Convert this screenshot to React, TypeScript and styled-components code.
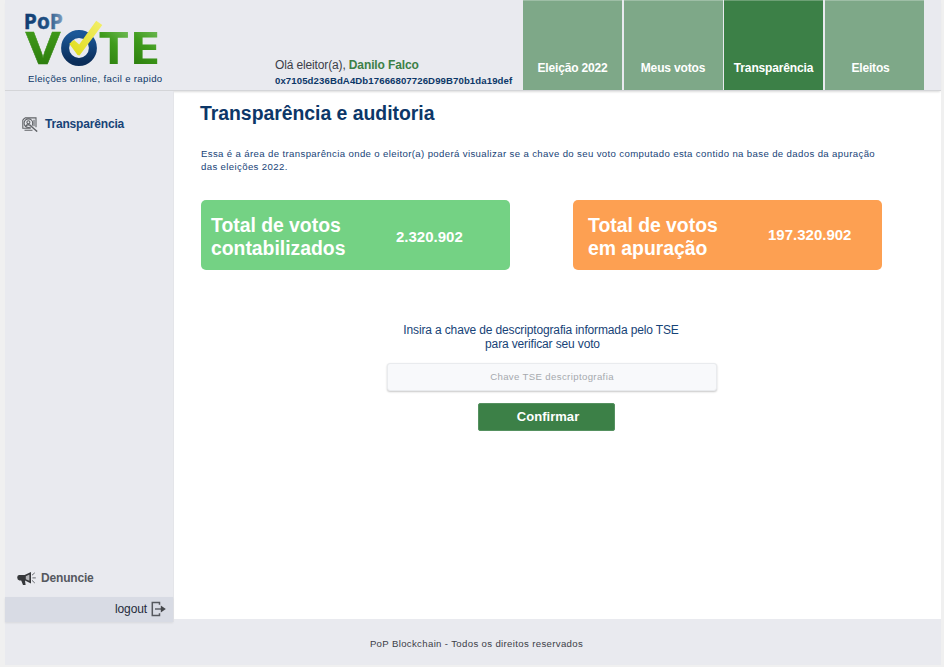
import React from "react";
import styled, { createGlobalStyle } from "styled-components";

const GlobalStyle = createGlobalStyle`
  * { box-sizing: border-box; }
  body {
    margin: 0;
    background: #f0f0f0;
    font-family: "Liberation Sans", Arial, sans-serif;
    font-size: 12px;
    color: #0c3768;
  }
`;

const Page = styled.div`
  display: flex;
  flex-direction: column;
  width: 936px;
  height: 665px;
  margin-left: 5px;
  background: #fff;
`;

const Header = styled.header`
  position: relative;
  display: flex;
  flex: none;
  height: 91px;
  padding-right: 17.5px;
  background: #e9eaef;
  border-bottom: 1px solid #d4d5d8;
  box-shadow: 0 2px 2px -1px rgba(0, 0, 0, 0.14);
`;

const Brand = styled.div`
  width: 270px;
  padding: 8px 0 0 18px;
`;

const LogoSvg = styled.svg`
  display: block;
  width: 144px;
  height: 62px;
  overflow: visible;
`;

const Tagline = styled.p`
  margin: 3px 0 0 5px;
  font-size: 9.6px;
  line-height: 12px;
  letter-spacing: 0.33px;
  white-space: nowrap;
`;

const Voter = styled.div`
  flex: 1;
  padding-top: 58px;
  white-space: nowrap;
`;

const Greeting = styled.p`
  margin: 0;
  line-height: 15px;
  letter-spacing: -0.14px;
  color: #3c4048;
`;

const VoterName = styled.strong`
  color: #3c8047;
  letter-spacing: -0.11px;
`;

const WalletKey = styled.p`
  margin: 2px 0 0;
  font-size: 9.6px;
  font-weight: bold;
  line-height: 12px;
  letter-spacing: 0.1px;
`;

const Tabs = styled.nav`
  display: flex;
  gap: 1.5px;
`;

const Tab = styled.a<{ $active?: boolean; $trailing?: boolean }>`
  display: flex;
  align-items: flex-end;
  justify-content: center;
  width: 99px;
  height: 90px;
  padding-bottom: 14px;
  padding-right: ${(p) => (p.$trailing ? "7px" : "0")};
  border-top: 1px solid rgba(255, 255, 255, 0.25);
  background: ${(p) => (p.$active ? "#3c8047" : "#7ea888")};
  color: #fff;
  font-weight: bold;
  line-height: 15px;
  letter-spacing: -0.16px;
`;

const Body = styled.div`
  display: flex;
  flex: 1;
  min-height: 0;
`;

const Sidebar = styled.aside`
  display: flex;
  flex-direction: column;
  width: 169px;
  margin-bottom: -3px;
  background: #e9eaef;
  border-right: 1px solid #e4e5e9;
  z-index: 1;
`;

const SideLink = styled.a<{ $muted?: boolean }>`
  display: flex;
  align-items: center;
  gap: ${(p) => (p.$muted ? "5px" : "7px")};
  height: 18px;
  margin: ${(p) => (p.$muted ? "auto 0 10px 12px" : "24px 0 0 17px")};
  color: ${(p) => (p.$muted ? "#55585e" : "#174377")};
  font-weight: bold;
  letter-spacing: -0.18px;
`;

const Logout = styled.button`
  display: flex;
  align-items: center;
  justify-content: flex-end;
  gap: 4px;
  width: 168px;
  height: 25px;
  padding: 0 7px 1px 0;
  border: 0;
  background: #d8dbe4;
  box-shadow: 0 1px 2px rgba(0, 0, 0, 0.08);
  color: #252b3b;
  font: inherit;
  letter-spacing: -0.12px;
`;

const Main = styled.main`
  flex: 1;
  padding: 11px 0 0 27px;
`;

const Title = styled.h1`
  margin: 0 0 0 -1px;
  font-size: 19.4px;
  line-height: 23px;
  letter-spacing: -0.02px;
`;

const Intro = styled.p`
  margin: 22px 0 0;
  font-size: 9.6px;
  line-height: 13px;
  letter-spacing: 0.37px;
  white-space: nowrap;
  color: #174377;
`;

const Totals = styled.div`
  display: flex;
  gap: 63px;
  margin-top: 27px;
`;

const TotalCard = styled.section<{ $tone: "green" | "orange" }>`
  display: grid;
  grid-template-columns: ${(p) => (p.$tone === "green" ? "185px" : "180px")} auto;
  align-items: center;
  justify-content: start;
  width: 309px;
  height: 70px;
  padding: ${(p) => (p.$tone === "green" ? "4px 0 0 10px" : "4px 0 0 15px")};
  border-radius: 5px;
  background: ${(p) => (p.$tone === "green" ? "#74d284" : "#fda052")};
  color: #fff;
  font-weight: bold;
`;

const TotalLabel = styled.h2`
  margin: 0;
  font-size: 19.4px;
  line-height: 23px;
  letter-spacing: -0.02px;
`;

const TotalValue = styled.span<{ $raised?: boolean }>`
  font-size: 15px;
  line-height: 18px;
  padding-bottom: ${(p) => (p.$raised ? "4px" : "0")};
`;

const KeyForm = styled.form`
  display: flex;
  flex-direction: column;
  align-items: center;
  width: 330px;
  margin: 53px 0 0 186px;
`;

const KeyLabel = styled.label`
  margin-right: 22px;
  line-height: 14px;
  letter-spacing: -0.14px;
  text-align: center;
  white-space: nowrap;
  color: #174377;
`;

const SecondLine = styled.span`
  display: block;
  padding-left: 3px;
`;

const KeyInput = styled.input`
  width: 330px;
  height: 28px;
  margin-top: 12px;
  padding: 0 0 1px;
  border: 1px solid #e9ebee;
  border-radius: 3px;
  background: #f8f9fb;
  box-shadow: 0 1px 2px rgba(0, 0, 0, 0.22);
  font: 9.6px "Liberation Sans", Arial, sans-serif;
  letter-spacing: 0.37px;
  text-align: center;
  &::placeholder { color: #a6a9ae; opacity: 1; }
`;

const Confirm = styled.button`
  width: 137px;
  height: 28px;
  margin: 12px 11px 0 0;
  padding: 0 0 1px 3px;
  border: 1px solid #559160;
  border-radius: 2px;
  background: #3c8047;
  color: #fff;
  font: bold 13px "Liberation Sans", Arial, sans-serif;
  letter-spacing: 0.04px;
`;

const Footer = styled.footer`
  display: flex;
  flex: none;
  justify-content: center;
  height: 46px;
  padding: 18px 0 0 7px;
  background: #e9eaef;
  color: #3c4048;
  font-size: 9.6px;
  line-height: 13px;
  letter-spacing: 0.35px;
`;

const Icon = styled.svg`
  flex: none;
  display: block;
`;

const Logo = () => (
  <LogoSvg viewBox="23 8 144 62" fontFamily="'Open Sans', 'Noto Sans', sans-serif" fontWeight="700">
    <defs>
      <linearGradient id="leaf" x1="0" y1="0" x2="0" y2="1">
        <stop offset="0" stopColor="#47a51f" />
        <stop offset="1" stopColor="#277409" />
      </linearGradient>
      <linearGradient id="leafLight" x1="0.7" y1="0.15" x2="0.4" y2="0.9">
        <stop offset="0" stopColor="#6fba55" />
        <stop offset="0.45" stopColor="#3f9b1c" />
        <stop offset="1" stopColor="#2c7e0d" />
      </linearGradient>
      <linearGradient id="sea" x1="0" y1="0" x2="0" y2="1">
        <stop offset="0" stopColor="#1b5797" />
        <stop offset="1" stopColor="#0b2d59" />
      </linearGradient>
      <linearGradient id="seaFade" x1="0" y1="0" x2="1" y2="0">
        <stop offset="0" stopColor="#0f3a70" />
        <stop offset="0.6" stopColor="#205184" />
        <stop offset="1" stopColor="#7c9cbe" />
      </linearGradient>
      <linearGradient id="sun" x1="1" y1="0" x2="0" y2="1">
        <stop offset="0" stopColor="#f3ef6b" />
        <stop offset="1" stopColor="#dfdc18" />
      </linearGradient>
    </defs>
    <text x="23.8" y="29.3" fontSize="22" textLength="39.2" lengthAdjust="spacingAndGlyphs" fill="url(#seaFade)" stroke="url(#seaFade)" strokeWidth="0.4">PoP</text>
    <text x="25.5" y="64.3" fontSize="45.5" textLength="35" lengthAdjust="spacingAndGlyphs" fill="url(#leaf)" stroke="url(#leaf)" strokeWidth="0.5">V</text>
    <text x="98.6" y="64.3" fontSize="45.5" textLength="30.5" lengthAdjust="spacingAndGlyphs" fill="url(#leafLight)">T</text>
    <text x="129" y="64.3" fontSize="45.5" textLength="31.5" lengthAdjust="spacingAndGlyphs" fill="url(#leafLight)">E</text>
    <circle cx="79" cy="48" r="13.9" fill="none" stroke="url(#sea)" strokeWidth="8" />
    <path d="M69.3 43.8 74 40 79.2 44.5 96.2 20.8 102.3 25 79.5 55.5 77.5 55Z" fill="url(#sun)" />
  </LogoSvg>
);

const AuditIcon = () => (
  <Icon width="16" height="15" viewBox="0 0 16 15" fill="none" stroke="#606367" strokeWidth="1.1">
    <path d="M3 .9h11v9.4M.8 3v8.2h8M3 .9.8 3M2.5 13.2h8M12 2.8v6.4" />
    <circle cx="6.4" cy="6.2" r="4.3" />
    <circle cx="6.4" cy="5.2" r="1.5" />
    <path d="M3.8 9.2c.4-2 4.6-2 5 0M9.4 9.4l5.8 5.2" strokeWidth="1.4" />
  </Icon>
);

const MegaphoneIcon = () => (
  <Icon width="19" height="15" viewBox="0 0 19 15">
    <path d="M2 4h5.6L14 1v11.5L8 9.6 8.6 14H6L4.2 9.5H2.4Q.2 9 .2 6.6T2 4Z" fill="#35373a" />
    <path d="M8.8 5.3 12.4 3.6v6.1L8.8 8.2Z" fill="#b4b5b9" />
    <path d="m15 4.2 2.8-2.4M15.4 6.9h3.4M15 9.4l2.8 2.6" stroke="#66696e" fill="none" />
  </Icon>
);

const LogoutIcon = () => (
  <Icon width="15" height="16" viewBox="0 0 15 16">
    <path d="M8.5 3.8V1.5H1.3v13h7.2v-2.3" fill="none" stroke="#55585e" strokeWidth="1.5" />
    <path d="M4 8H11" stroke="#55585e" strokeWidth="1.4" />
    <path d="M9.8 4.4 14.8 8 9.8 11.6Z" fill="#45484c" />
  </Icon>
);

export default function App() {
  return (
    <>
      <GlobalStyle />
      <Page>
        <Header>
          <Brand>
            <Logo />
            <Tagline>Eleições online, facil e rapido</Tagline>
          </Brand>
          <Voter>
            <Greeting>
              Olá eleitor(a), <VoterName>Danilo Falco</VoterName>
            </Greeting>
            <WalletKey>0x7105d236BdA4Db17666807726D99B70b1da19def</WalletKey>
          </Voter>
          <Tabs>
            <Tab>Eleição 2022</Tab>
            <Tab>Meus votos</Tab>
            <Tab $active>Transparência</Tab>
            <Tab $trailing>Eleitos</Tab>
          </Tabs>
        </Header>
        <Body>
          <Sidebar>
            <SideLink>
              <AuditIcon />
              Transparência
            </SideLink>
            <SideLink $muted>
              <MegaphoneIcon />
              Denuncie
            </SideLink>
            <Logout>
              logout
              <LogoutIcon />
            </Logout>
          </Sidebar>
          <Main>
            <Title>Transparência e auditoria</Title>
            <Intro>
              Essa é a área de transparência onde o eleitor(a) poderá visualizar se a chave do seu voto computado esta contido na base de dados da apuração
              <br />
              das eleições 2022.
            </Intro>
            <Totals>
              <TotalCard $tone="green">
                <TotalLabel>
                  Total de votos
                  <br />
                  contabilizados
                </TotalLabel>
                <TotalValue>2.320.902</TotalValue>
              </TotalCard>
              <TotalCard $tone="orange">
                <TotalLabel>
                  Total de votos
                  <br />
                  em apuração
                </TotalLabel>
                <TotalValue $raised>197.320.902</TotalValue>
              </TotalCard>
            </Totals>
            <KeyForm>
              <KeyLabel htmlFor="key">
                Insira a chave de descriptografia informada pelo TSE
                <SecondLine>para verificar seu voto</SecondLine>
              </KeyLabel>
              <KeyInput id="key" placeholder="Chave TSE descriptografia" />
              <Confirm type="button">Confirmar</Confirm>
            </KeyForm>
          </Main>
        </Body>
        <Footer>PoP Blockchain - Todos os direitos reservados</Footer>
      </Page>
    </>
  );
}
